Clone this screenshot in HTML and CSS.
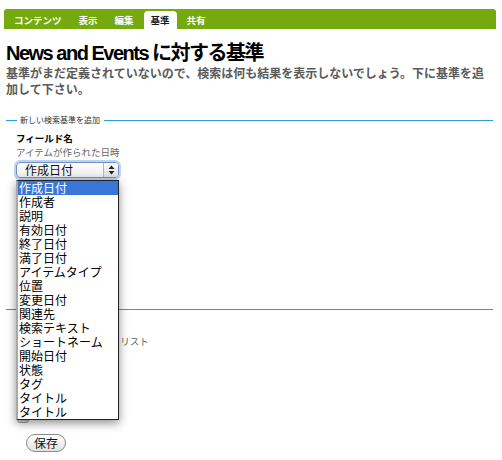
FILE: index.html
```html
<!DOCTYPE html>
<html lang="ja">
<head>
<meta charset="utf-8">
<title>News and Events に対する基準</title>
<link rel="stylesheet" href="styles.css">
</head>
<body>
<nav class="tabs">
  <span class="tab">コンテンツ</span>
  <span class="tab">表示</span>
  <span class="tab">編集</span>
  <span class="tab active">基準</span>
  <span class="tab">共有</span>
</nav>
<main class="main">
  <h1 class="title">News and Events に対する基準</h1>
  <p class="desc">基準がまだ定義されていないので、検索は何も結果を表示しないでしょう。下に基準を追加して下さい。</p>

  <section class="group">
    <div class="legend"><span class="line short"></span><span class="ltext">新しい検索基準を追加</span><span class="line grow"></span></div>
    <div class="body">
      <div class="label">フィールド名</div>
      <div class="help">アイテムが作られた日時</div>
      <div class="selectwrap">
        <div class="select">
          <span class="selval">作成日付</span>
          <span class="arrows"><svg width="7" height="10" viewBox="0 0 7 10"><path d="M3.5 0.5 L6.5 4 L0.5 4 Z" fill="#222"/><path d="M3.5 9.5 L6.5 6 L0.5 6 Z" fill="#222"/></svg></span>
        </div>
        <ul class="menu">
          <li class="sel">作成日付</li>
          <li>作成者</li>
          <li>説明</li>
          <li>有効日付</li>
          <li>終了日付</li>
          <li>満了日付</li>
          <li>アイテムタイプ</li>
          <li>位置</li>
          <li>変更日付</li>
          <li>関連先</li>
          <li>検索テキスト</li>
          <li>ショートネーム</li>
          <li>開始日付</li>
          <li>状態</li>
          <li>タグ</li>
          <li>タイトル</li>
          <li>タイトル</li>
        </ul>
      </div>
    </div>
  </section>

  <section class="group group2">
    <div class="legend"><span class="line grow"></span></div>
    <div class="body">
      <div class="label">&nbsp;</div>
      <div class="help"><span class="covered">並べ替えに使える項目の</span>リスト</div>
      <div class="listbox"></div>
    </div>
  </section>

  <button class="save" type="button">保存</button>
</main>
</body>
</html>
```

FILE: styles.css
```css
* { box-sizing: border-box; }

body {
  margin: 0;
  background: #fff;
  font-family: "Liberation Sans", "Noto Sans CJK JP", sans-serif;
  color: #000;
}

.tabs {
  display: flex;
  gap: 3px;
  margin: 9px 6px 0 4px;
  padding: 2px 0 0 3px;
  height: 20px;
  background: #75aa0f;
  border-radius: 3px 3px 0 0;
}

.tab {
  height: 18px;
  line-height: 18px;
  padding: 0 7px;
  font-family: "Noto Sans CJK JP", sans-serif;
  font-size: 9.5px;
  font-weight: bold;
  color: #fff;
}

.tab.active {
  background: #fff;
  color: #1a1a1a;
  border-radius: 4px 4px 0 0;
}

.main {
  padding: 0 9px 0 6px;
}

.title {
  margin: 12px 0 0;
  font-size: 20px;
  line-height: 24px;
  font-weight: bold;
  letter-spacing: -1.5px;
  color: #000;
}

.desc {
  margin: 0;
  font-family: "Noto Sans CJK JP", sans-serif;
  font-size: 12px;
  line-height: 16px;
  font-weight: bold;
  color: #5a5a5a;
}

.group {
  margin-top: 17px;
}

.group2 {
  margin-top: 125px;
}

.legend {
  display: flex;
  align-items: center;
  height: 12px;
}

.line {
  height: 1px;
  background: #2b9fd8;
}

.line.short { width: 11px; }
.line.grow { flex: 1; }

.ltext {
  margin: 0 4px 0 3px;
  font-family: "Noto Sans CJK JP", sans-serif;
  font-size: 8px;
  line-height: 12px;
  color: #333;
}

.body {
  padding: 6px 0 0 10px;
}

.label {
  font-family: "Noto Sans CJK JP", sans-serif;
  font-size: 9.5px;
  line-height: 12px;
  font-weight: bold;
  color: #000;
}

.help {
  margin-top: 2px;
  font-family: "Noto Sans CJK JP", sans-serif;
  font-size: 9.5px;
  line-height: 12px;
  color: #666;
}

.covered {
  visibility: hidden;
}

.selectwrap {
  position: relative;
  margin-top: 4px;
  width: 103px;
}

.select {
  display: flex;
  align-items: center;
  height: 16px;
  border: 1px solid #6e8fc8;
  border-radius: 4px;
  background: linear-gradient(#ffffff, #ececec);
  box-shadow: 0 0 0 2px rgba(110, 155, 225, 0.45);
  overflow: hidden;
}

.selval {
  flex: 1;
  padding-left: 8px;
  font-family: "Noto Sans CJK JP", sans-serif;
  font-size: 12px;
  line-height: 14px;
  color: #111;
}

.arrows {
  display: flex;
  align-items: center;
  justify-content: center;
  width: 15px;
  height: 100%;
  border-left: 1px solid #b5b5b5;
  background: linear-gradient(#fdfdfd, #dedede);
}

.menu {
  position: absolute;
  top: 18px;
  left: 0;
  z-index: 5;
  width: 103px;
  margin: 0;
  padding: 0;
  list-style: none;
  background: #fff;
  border: 1px solid #222;
  border-left: 2px solid #a8a8a8;
  box-shadow: 0 3px 9px rgba(0, 0, 0, 0.45);
}

.menu li {
  height: 14px;
  line-height: 14px;
  padding-left: 1px;
  font-family: "Noto Sans CJK JP", sans-serif;
  font-size: 12px;
  color: #000;
  white-space: nowrap;
}

.menu li.sel {
  background: #3a76d8;
  color: #fff;
}

.listbox {
  margin: 64px 0 0 1px;
  width: 12px;
  height: 12px;
  border: 1px solid #a5a5a5;
  border-radius: 0 0 3px 3px;
  background: #dcdcdc;
}

.save {
  display: block;
  margin: 11px 0 0 20px;
  width: 40px;
  height: 18px;
  padding: 0;
  border: 1px solid #8a8a8a;
  border-radius: 9px;
  background: linear-gradient(#ffffff, #e2e2e2);
  font-family: "Noto Sans CJK JP", sans-serif;
  font-size: 12px;
  line-height: 16px;
  color: #111;
}
```
